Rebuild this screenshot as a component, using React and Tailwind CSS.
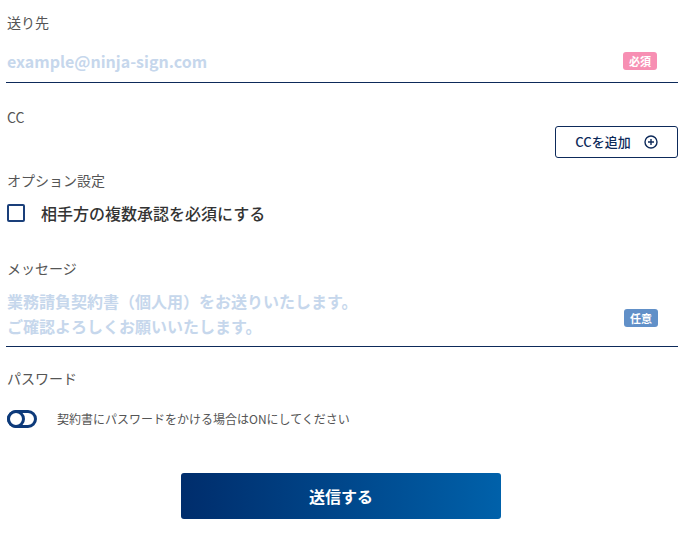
import { useState } from "react";

const font = { fontFamily: '"Noto Sans CJK JP", "Noto Sans", sans-serif' };

const Label = ({ children }) => (
    <p className="text-[14px] leading-[20px] text-[#555]">{children}</p>
);

const Badge = ({ children, color }) => (
    <span className={`block text-[11px] leading-[18px] font-bold text-white px-[6px] rounded-[3px] ${color}`}>
        {children}
    </span>
);

export default function App() {
    const [required, setRequired] = useState(false);
    const [password, setPassword] = useState(false);

    return (
        <div className="w-[688px] h-[537px] bg-white pl-[7px] pr-[10px] pt-[12px]" style={font}>
            {/* 送り先 */}
            <Label>送り先</Label>
            <div className="flex items-center justify-between border-b border-[#0d2a5a] -ml-[1px] pl-[1px] pt-[17px] pb-[9px]">
                <span className="text-[16px] leading-[24px] font-bold text-[#c6d7ec]">example@ninja-sign.com</span>
                <span className="mr-[21px]"><Badge color="bg-[#f78fb3]">必須</Badge></span>
            </div>

            {/* CC */}
            <div className="mt-[24px]">
                <Label>CC</Label>
            </div>
            <div className="flex justify-end -mt-[1px]">
                <button className="h-[32px] w-[123px] border border-[#0d2a5a] rounded-[3px] flex items-center justify-center gap-[13px] text-[13px] font-medium text-[#0d2a5a]">
                    CCを追加
                    <svg width="14" height="14" viewBox="0 0 14 14" fill="none" stroke="#0d2a5a" strokeWidth="1.4">
                        <circle cx="7" cy="7" r="6" />
                        <path d="M7 4v6M4 7h6" />
                    </svg>
                </button>
            </div>

            {/* オプション設定 */}
            <div className="mt-[12px]">
                <Label>オプション設定</Label>
            </div>
            <label className="flex items-center mt-[11px] cursor-pointer" onClick={() => setRequired(!required)}>
                <span className={`w-[18px] h-[18px] border-2 border-[#1a3f7a] rounded-[2px] ${required ? "bg-[#1a3f7a]" : ""}`} />
                <span className="ml-[16px] text-[16px] font-medium text-[#333]">相手方の複数承認を必須にする</span>
            </label>

            {/* メッセージ */}
            <div className="mt-[33px]">
                <Label>メッセージ</Label>
            </div>
            <div className="flex items-end justify-between border-b border-[#0d2a5a] -ml-[1px] pl-[1px] pt-[11px] pb-[7px]">
                <p className="text-[16px] leading-[25px] font-bold text-[#c6d7ec]">
                    業務請負契約書（個人用）をお送りいたします。<br />
                    ご確認よろしくお願いいたします。
                </p>
                <span className="mr-[20px] mb-[12px]"><Badge color="bg-[#6190c8]">任意</Badge></span>
            </div>

            {/* パスワード */}
            <div className="mt-[21px]">
                <Label>パスワード</Label>
            </div>
            <div className="flex items-center mt-[22px]">
                <button
                    onClick={() => setPassword(!password)}
                    className="relative w-[30px] h-[18px] border-[3px] border-[#0d3a7a] rounded-full"
                >
                    <span className={`absolute top-[-3px] w-[18px] h-[18px] border-[3px] border-[#0d3a7a] rounded-full bg-white ${password ? "right-[-3px]" : "left-[-3px]"}`} />
                </button>
                <span className="ml-[20px] text-[12px] text-[#555]">契約書にパスワードをかける場合はONにしてください</span>
            </div>

            {/* 送信 */}
            <div className="flex justify-center mt-[45px] pr-[3px]">
                <button className="w-[320px] h-[46px] rounded-[3px] bg-gradient-to-r from-[#002d6c] to-[#0061aa] text-white text-[16px] font-bold">
                    送信する
                </button>
            </div>
        </div>
    );
}
